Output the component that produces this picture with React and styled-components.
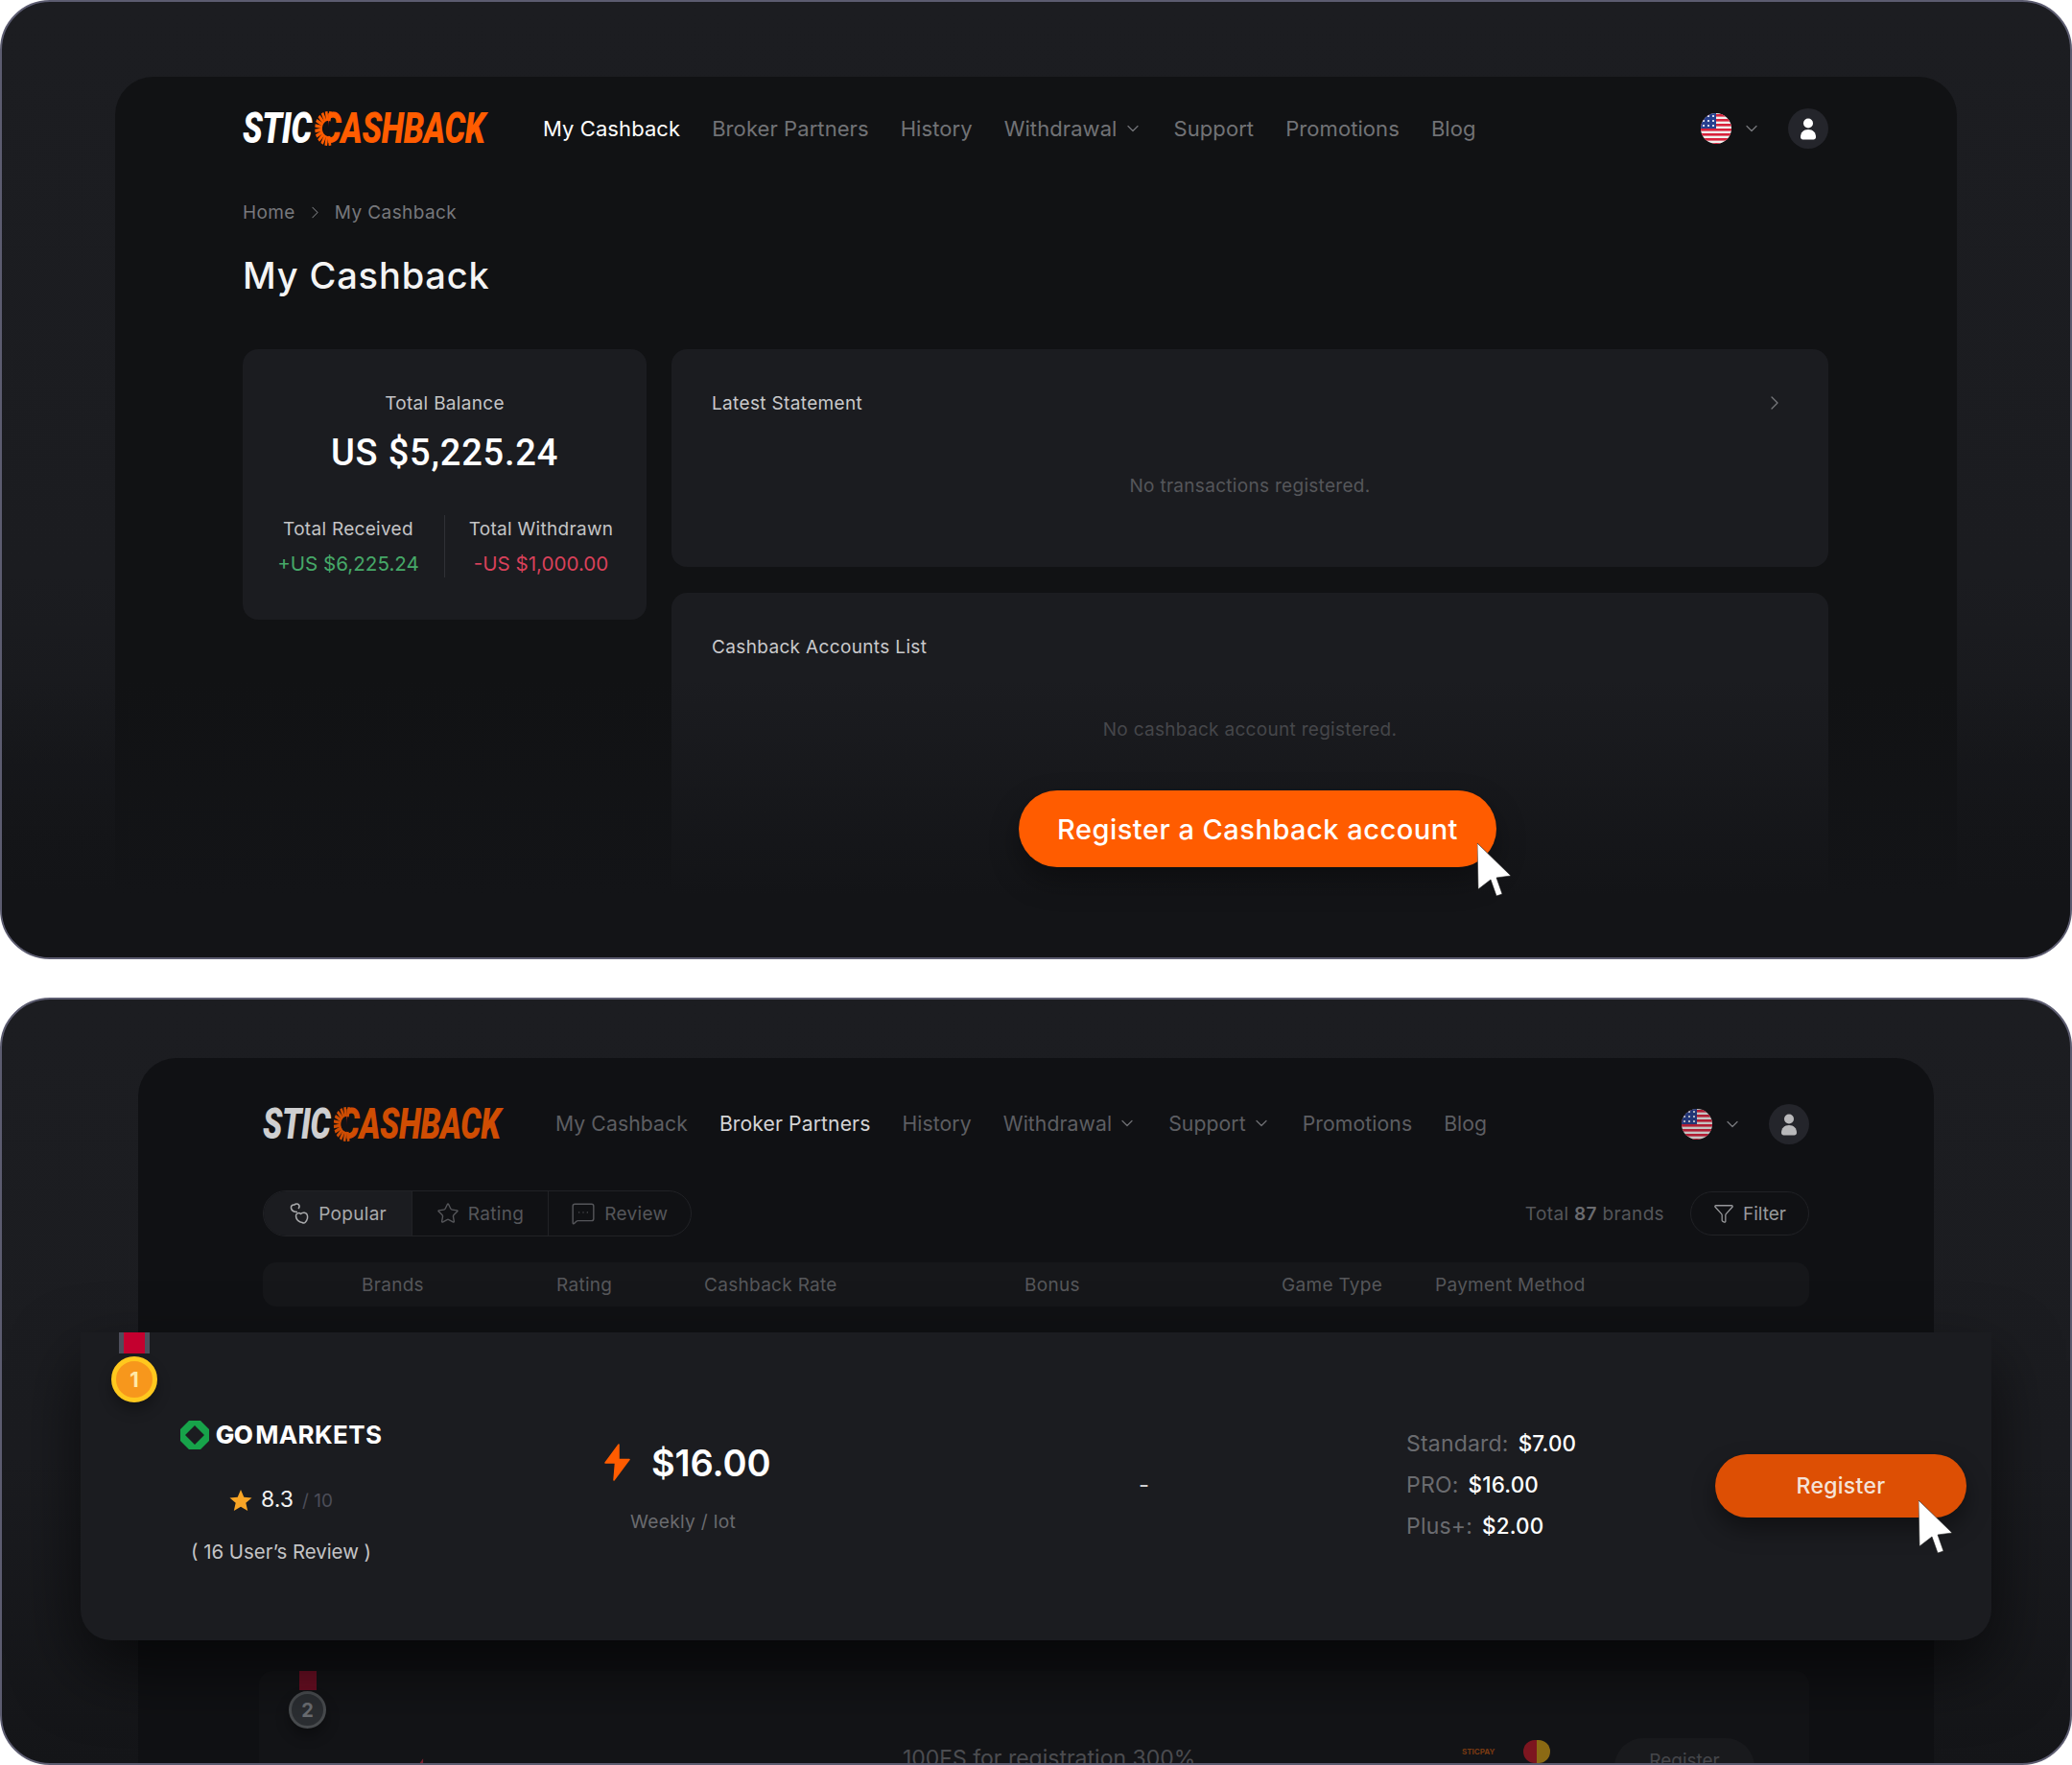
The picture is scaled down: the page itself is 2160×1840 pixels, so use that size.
import React from "react";
import styled, { createGlobalStyle } from "styled-components";
import { ChevronDown, ChevronRight, Star, MessageSquareMore, Funnel } from "lucide-react";

const GlobalStyle = createGlobalStyle`
	html, body {
		margin: 0;
		padding: 0;
		background: #fff;
		font-family: "Inter", "Open Sans", sans-serif;
	}
	* {
		box-sizing: border-box;
	}
`;

const Page = styled.div`
	width: 2160px;
	height: 1840px;
	display: flex;
	flex-direction: column;
	gap: 40px;
`;

const Panel = styled.section`
	position: relative;
	width: 100%;
	height: ${(p) => p.$height}px;
	padding-top: ${(p) => p.$top}px;
	border: 2px solid #5c5c70;
	border-radius: 52px;
	overflow: hidden;
	background: linear-gradient(180deg, #1c1d21 0%, #1b1c20 60%, #141518 100%);
`;

const Inner = styled.div`
	height: 1200px;
	margin: 0 ${(p) => p.$side}px;
	padding: ${(p) => p.$pad};
	border-radius: 40px;
	background: ${(p) => p.$bg};
`;

const Fade = styled.div`
	position: absolute;
	left: 0;
	right: 0;
	bottom: 0;
	height: ${(p) => p.$height}px;
	background: linear-gradient(180deg, rgba(19, 20, 23, 0) 0%, rgba(19, 20, 23, 1) 78%);
	pointer-events: none;
`;

const Header = styled.header`
	display: flex;
	align-items: center;
	height: 42px;
`;

const LogoBox = styled.div`
	display: flex;
	flex: none;
	align-items: center;
	width: ${(p) => p.$width}px;
	margin-right: 56px;
	height: 42px;
	font-family: "Roboto", "Liberation Sans", sans-serif;
	font-size: 44px;
	font-weight: 900;
	font-style: italic;
	white-space: nowrap;
	opacity: ${(p) => (p.$dim ? 0.8 : 1)};
`;

const LogoText = styled.div`
	position: relative;
	display: flex;
	transform: scaleX(${(p) => p.$scale});
	transform-origin: left center;
	letter-spacing: -0.5px;
`;

const LogoWhite = styled.span`
	color: #fff;
	margin-right: 12px;
`;

const LogoOrange = styled.span`
	color: #ff5c00;
`;

const LogoRays = styled.svg`
	position: absolute;
	left: 97px;
	top: 8px;
`;

const Nav = styled.nav`
	display: flex;
	align-items: center;
	gap: 33px;
	flex: 1;
	margin-top: ${(p) => (p.$dim ? -2 : 0)}px;
`;

const NavItem = styled.a`
	display: flex;
	align-items: center;
	gap: 6px;
	font-size: ${(p) => (p.$dim ? 21.2 : 22)}px;
	letter-spacing: 0.08px;
	white-space: nowrap;
	color: ${(p) => (p.$active ? (p.$dim ? "#d4d4d6" : "#fff") : p.$dim ? "#5d5e62" : "#717276")};
	svg {
		color: ${(p) => (p.$dim ? "#6d6e72" : "#717276")};
	}
`;

const Tools = styled.div`
	display: flex;
	align-items: center;
`;

const FlagSvg = styled.svg`
	display: block;
	opacity: ${(p) => (p.$dim ? 0.8 : 1)};
`;

const LangChevron = styled(ChevronDown)`
	margin: 0 28px 0 11px;
	color: #77787c;
`;

const Avatar = styled.div`
	width: 42px;
	height: 42px;
	border-radius: 50%;
	background: #24252b;
	display: grid;
	place-content: center;
	color: ${(p) => (p.$dim ? "#b9b9bb" : "#fff")};
`;

const Breadcrumb = styled.div`
	display: flex;
	align-items: center;
	gap: 10px;
	margin-top: 52px;
	height: 28px;
	font-size: 19px;
	letter-spacing: 0.4px;
	color: #77787c;
`;

const Title = styled.h1`
	margin: 24px 0 49px;
	font-size: 38px;
	line-height: 56px;
	font-weight: 500;
	letter-spacing: 0.85px;
	color: #f4f4f4;
`;

const Board = styled.div`
	display: grid;
	grid-template-columns: 421px 1fr;
	gap: 26px;
	align-items: start;
`;

const Stack = styled.div`
	display: flex;
	flex-direction: column;
	gap: 27px;
`;

const Card = styled.div`
	border-radius: 16px;
	background: #1b1c20;
`;

const BalanceCard = styled(Card)`
	height: 282px;
	padding: 42px 10px 0;
	text-align: center;
`;

const BalanceLabel = styled.div`
	font-size: 19px;
	line-height: 30px;
	letter-spacing: 0.3px;
	color: #c4c4c6;
`;

const BalanceAmount = styled.div`
	margin-top: 16px;
	font-family: "Roboto", sans-serif;
	font-size: 38px;
	line-height: 40px;
	font-weight: 500;
	letter-spacing: 0.8px;
	color: #fff;
`;

const Split = styled.div`
	display: grid;
	grid-template-columns: 1fr 1px 1fr;
	margin-top: 45px;
`;

const SplitLine = styled.div`
	height: 65px;
	background: #2f3035;
`;

const SplitCol = styled.div`
	display: flex;
	flex-direction: column;
	gap: 6px;
`;

const SplitValue = styled.div`
	font-size: 20.6px;
	line-height: 30px;
	color: ${(p) => p.$color};
`;

const StatementCard = styled(Card)`
	height: ${(p) => p.$height}px;
	padding: 41px 42px 0;
`;

const CardHead = styled.div`
	display: flex;
	justify-content: space-between;
	align-items: center;
	height: 30px;
	font-size: 19px;
	letter-spacing: 0.35px;
	color: #c9c9cb;
	svg {
		margin-right: 2px;
		color: #77787c;
	}
`;

const Empty = styled.div`
	margin-top: 57px;
	text-align: center;
	font-size: 19px;
	line-height: 30px;
	letter-spacing: 0.3px;
	color: #55565a;
`;

const BigButton = styled.button`
	position: relative;
	z-index: 2;
	display: block;
	width: 498px;
	height: 80px;
	margin: 48px 0 0 320px;
	border: none;
	border-radius: 40px;
	background: #ff5c00;
	box-shadow: 0 14px 30px rgba(0, 0, 0, 0.35);
	font-family: inherit;
	font-size: 29px;
	font-weight: 500;
	letter-spacing: 0.5px;
	color: #fff;
`;

const CursorSvg = styled.svg`
	position: absolute;
	z-index: 3;
	left: ${(p) => p.$x}px;
	top: ${(p) => p.$y}px;
`;

const Toolbar = styled.div`
	display: flex;
	align-items: center;
	justify-content: space-between;
	margin-top: 48px;
`;

const Tabs = styled.div`
	display: flex;
	width: 447px;
	height: 48px;
	border: 1px solid #212226;
	border-radius: 24px;
	overflow: hidden;
`;

const Tab = styled.div`
	display: flex;
	align-items: center;
	justify-content: center;
	gap: 9px;
	width: ${(p) => p.$width}px;
	height: 100%;
	font-size: 19px;
	letter-spacing: 0.3px;
	color: ${(p) => (p.$active ? "#a9aaac" : "#55565a")};
	background: ${(p) => (p.$active ? "#1b1c20" : "transparent")};
	border-right: ${(p) => (p.$last ? "none" : "1px solid #212226")};
`;

const Totals = styled.div`
	display: flex;
	align-items: center;
	gap: 27px;
`;

const TotalText = styled.div`
	font-size: 19px;
	letter-spacing: 0.35px;
	color: #55565a;
	b {
		font-weight: 600;
		color: #6a6b6f;
	}
`;

const FilterButton = styled.div`
	display: flex;
	align-items: center;
	justify-content: center;
	gap: 9px;
	width: 124px;
	height: 46px;
	border: 1px solid #212226;
	border-radius: 23px;
	font-size: 19px;
	color: #97989b;
`;

const TableHead = styled.div`
	display: grid;
	grid-template-columns: 203px 154px 334px 268px 160px 1fr;
	align-items: center;
	height: 46px;
	margin-top: 27px;
	padding-left: 103px;
	border-radius: 14px;
	background: #16171a;
	font-size: 19px;
	letter-spacing: 0.3px;
	color: #56575b;
`;

const BrandCard = styled.div`
	position: relative;
	z-index: 2;
	display: grid;
	grid-template-columns: 446px 370px 466px 322px 262px;
	align-items: center;
	height: 321px;
	margin: 27px -190px 0;
	padding-left: 100px;
	border-radius: 0 0 32px 32px;
	background: #1b1c20;
	box-shadow: 0 30px 70px rgba(0, 0, 0, 0.6);
`;

const Medal = styled.div`
	position: absolute;
	left: ${(p) => p.$x}px;
	top: ${(p) => p.$y}px;
	display: flex;
	flex-direction: column;
	align-items: center;
	gap: ${(p) => p.$gap}px;
`;

const Ribbon = styled.div`
	width: ${(p) => p.$width}px;
	height: ${(p) => p.$height}px;
	background: ${(p) => p.$bg};
	border-left: ${(p) => p.$side} solid #4d4e5c;
	border-right: ${(p) => p.$side} solid #4d4e5c;
`;

const MedalCoin = styled.div`
	display: grid;
	place-content: center;
	width: ${(p) => p.$size}px;
	height: ${(p) => p.$size}px;
	border-radius: 50%;
	border: ${(p) => p.$ring};
	background: ${(p) => p.$bg};
	font-size: ${(p) => p.$font}px;
	font-weight: 700;
	color: ${(p) => p.$color};
	box-shadow: 0 8px 14px rgba(0, 0, 0, 0.3);
`;

const BrandCol = styled.div`
	width: 218px;
	display: flex;
	flex-direction: column;
	align-items: center;
	margin-top: 14px;
`;

const BrandLogo = styled.div`
	display: flex;
	align-items: center;
	font-size: 26px;
	line-height: 30px;
	color: #fff;
	white-space: nowrap;
`;

const BrandGo = styled.span`
	font-weight: 800;
	margin: 0 3px 0 7px;
	letter-spacing: -0.6px;
`;

const BrandMarkets = styled.span`
	font-weight: 700;
	letter-spacing: 0.35px;
`;

const Score = styled.div`
	display: flex;
	align-items: baseline;
	margin-top: 38px;
	font-size: 23px;
	line-height: 28px;
	color: #f2f2f2;
	small {
		margin-left: 9px;
		font-size: 19px;
		color: #4c4d58;
	}
	svg {
		margin-right: 9px;
		align-self: center;
	}
`;

const Reviews = styled.div`
	margin-top: 25px;
	font-size: 20.4px;
	line-height: 28px;
	color: #c4c4c6;
`;

const RateCol = styled.div`
	margin-top: 3px;
`;

const RateValue = styled.div`
	display: flex;
	align-items: center;
	gap: 22px;
	font-size: 38px;
	line-height: 44px;
	font-weight: 600;
	letter-spacing: -0.1px;
	color: #fff;
`;

const RateUnit = styled.div`
	margin: 25px 0 0 27px;
	font-size: 19.2px;
	line-height: 28px;
	letter-spacing: 0.3px;
	color: #6a6b6f;
`;

const Dash = styled.div`
	padding-left: 187px;
	margin-top: -4px;
	font-size: 24px;
	color: #d0d0d2;
`;

const Accounts = styled.div`
	display: flex;
	flex-direction: column;
	gap: 11px;
	margin-top: -4px;
`;

const AccountRow = styled.div`
	display: flex;
	gap: 10px;
	font-size: 23px;
	line-height: 32px;
	letter-spacing: 0.2px;
	color: #6a6b6f;
	b {
		font-size: 22.4px;
		font-weight: 500;
		color: #fff;
	}
`;

const RegisterButton = styled.button`
	height: 66px;
	width: 262px;
	margin-top: -2px;
	border: none;
	border-radius: 33px;
	background: #dd4f04;
	box-shadow: 0 12px 24px rgba(0, 0, 0, 0.4);
	font-family: inherit;
	font-size: 23px;
	font-weight: 500;
	letter-spacing: 0.3px;
	color: #f5e3d8;
`;

const NextRow = styled.div`
	position: relative;
	display: grid;
	grid-template-columns: 671px 585px 157px 1fr;
	height: 200px;
	margin: 32px 0 0 -4px;
	padding-top: 76px;
	background: #131417;
	border-radius: 14px;
	font-size: 23px;
	color: #4b4c50;
	align-items: start;
`;

const NextBolt = styled.svg`
	margin: 14px 0 0 160px;
`;

const NextPromo = styled.div`
	line-height: 30px;
	white-space: nowrap;
`;

const NextPay = styled.div`
	display: flex;
	align-items: center;
	gap: 30px;
	margin: -4px 0 0 -2px;
	font-size: 8px;
	font-weight: 700;
	color: #7a3a12;
`;

const NextCoins = styled.div`
	width: 28px;
	height: 24px;
	border-radius: 12px;
	background: linear-gradient(90deg, #7d1620 0%, #7d1620 50%, #8b6a14 50%, #8b6a14 100%);
`;

const NextButton = styled.div`
	width: 146px;
	height: 60px;
	margin-top: -6px;
	padding-top: 12px;
	border-radius: 30px;
	background: #191a1d;
	text-align: center;
	font-size: 19px;
	color: #45464a;
`;

const Flag = ({ id, dim }) => (
	<FlagSvg $dim={dim} width="32" height="32" viewBox="0 0 32 32">
		<defs>
			<clipPath id={id}>
				<circle cx="16" cy="16" r="16" />
			</clipPath>
		</defs>
		<g clipPath={`url(#${id})`}>
			<rect width="32" height="32" fill="#f2f0ee" />
			{[0, 5, 10, 15, 20, 25, 30].map((y) => (
				<rect key={y} y={y + 1} width="32" height="2.6" fill="#d8213b" />
			))}
			<rect width="16" height="16" fill="#28408f" />
			{[3, 8, 13].map((x) =>
				[3, 8, 13].map((y) => <circle key={`${x}-${y}`} cx={x} cy={y} r="1.1" fill="#fff" />)
			)}
		</g>
	</FlagSvg>
);

const UserIcon = () => (
	<svg width="24" height="24" viewBox="0 0 24 24" fill="currentColor">
		<circle cx="12" cy="6.5" r="5" />
		<path d="M4 21c0-5 3-8 8-8s8 3 8 8c0 1.600-1.200 2.400-2.400 2.400H6.400C5.200 23.400 4 22.600 4 21z" />
	</svg>
);

const Cursor = ({ x, y }) => (
	<CursorSvg $x={x} $y={y} width="36" height="56" viewBox="0 0 36 56">
		<path d="M0 0 L1 48 L14 38 L20 55 L26 53 L20 36 L35 34 Z" fill="#fff" stroke="#222" strokeWidth="0.6" />
	</CursorSvg>
);

const Logo = ({ width, dim, scale, bg }) => {
	const rays = [];
	for (let a = 80; a <= 280; a += 18) {
		const r = (a * Math.PI) / 180;
		rays.push(
			<line
				key={a}
				x1={18 + 8 * Math.cos(r)}
				y1={18 - 8 * Math.sin(r)}
				x2={18 + 18 * Math.cos(r)}
				y2={18 - 18 * Math.sin(r)}
				stroke="#ff5c00"
				strokeWidth="3.4"
			/>
		);
	}
	return (
		<LogoBox $width={width} $dim={dim}>
			<LogoText $scale={scale}>
				<LogoWhite>STIC</LogoWhite>
				<LogoOrange>CASHBACK</LogoOrange>
				<LogoRays width="36" height="36" viewBox="0 0 36 36">
					<path d="M18 0 A18 18 0 0 0 18 36 Z" fill={bg} />
					{rays}
				</LogoRays>
			</LogoText>
		</LogoBox>
	);
};

const Chevron = () => <ChevronDown size={20} strokeWidth={1.5} />;

const TopBar = ({ active, dim, supportMenu, flagId, logoWidth, logoScale, bg }) => (
	<Header>
		<Logo width={logoWidth} dim={dim} scale={logoScale} bg={bg} />
		<Nav $dim={dim}>
			{["My Cashback", "Broker Partners", "History", "Withdrawal", "Support", "Promotions", "Blog"].map((label) => (
				<NavItem key={label} $active={label === active} $dim={dim}>
					{label}
					{(label === "Withdrawal" || (supportMenu && label === "Support")) && <Chevron />}
				</NavItem>
			))}
		</Nav>
		<Tools>
			<Flag id={flagId} dim={dim} />
			<LangChevron size={20} strokeWidth={1.5} />
			<Avatar $dim={dim}>
				<UserIcon />
			</Avatar>
		</Tools>
	</Header>
);

const PopularIcon = () => (
	<svg width="22" height="24" viewBox="0 0 22 24" fill="none" stroke="currentColor" strokeWidth="1.5" strokeLinejoin="round">
		<path d="M9 10.500C6 10.500 3 9 2.500 6.500C2 4 4 2.500 6 3C7 1.500 9.500 1.500 10.500 3C11.500 4.500 11 6 10 7" />
		<path d="M14 21.500C10 20.500 7.500 17.500 7.500 14.500C7.500 12 10.500 10.500 12.500 12.500C14 10.500 19 10.500 19.500 14.500C20 18 18 20.500 17 21.500C16 22.500 15 22 14 21.500Z" />
	</svg>
);

const BoltIcon = ({ color, w, h }) => (
	<svg width={w} height={h} viewBox="0 0 27 39" fill={color} stroke={color} strokeWidth="1.5" strokeLinejoin="round">
		<path d="M15 1 L1 20 L11.500 20 L10 38 L26 16.500 L15 16.500 Z" />
	</svg>
);

const MyCashbackScreen = () => (
	<Panel $height={1000} $top={78}>
		<Inner $side={118} $pad="33px 134px 0 133px" $bg="#111214">
			<TopBar active="My Cashback" flagId="flag-top" logoWidth={257} logoScale={0.775} bg="#111214" />
			<Breadcrumb>
				Home
				<ChevronRight size={21} strokeWidth={1.2} />
				My Cashback
			</Breadcrumb>
			<Title>My Cashback</Title>
			<Board>
				<BalanceCard>
					<BalanceLabel>Total Balance</BalanceLabel>
					<BalanceAmount>US $5,225.24</BalanceAmount>
					<Split>
						<SplitCol>
							<BalanceLabel>Total Received</BalanceLabel>
							<SplitValue $color="#46a868">+US $6,225.24</SplitValue>
						</SplitCol>
						<SplitLine />
						<SplitCol>
							<BalanceLabel>Total Withdrawn</BalanceLabel>
							<SplitValue $color="#d9415a">-US $1,000.00</SplitValue>
						</SplitCol>
					</Split>
				</BalanceCard>
				<Stack>
					<StatementCard $height={227}>
						<CardHead>
							Latest Statement
							<ChevronRight size={24} strokeWidth={1.3} />
						</CardHead>
						<Empty>No transactions registered.</Empty>
					</StatementCard>
					<StatementCard $height={420}>
						<CardHead>Cashback Accounts List</CardHead>
						<Empty>No cashback account registered.</Empty>
						<BigButton>Register a Cashback account</BigButton>
					</StatementCard>
				</Stack>
			</Board>
		</Inner>
		<Fade $height={290} />
		<Cursor x={1538} y={877} />
	</Panel>
);

const BrokerScreen = () => (
	<Panel $height={800} $top={61}>
		<Inner $side={142} $pad="48px 130px 0" $bg="#101114">
			<TopBar
				active="Broker Partners"
				dim
				supportMenu
				flagId="flag-broker"
				logoWidth={249}
				logoScale={0.76}
				bg="#101114"
			/>
			<Toolbar>
				<Tabs>
					<Tab $active $width={156}>
						<PopularIcon />
						Popular
					</Tab>
					<Tab $width={142}>
						<Star size={24} strokeWidth={1.4} />
						Rating
					</Tab>
					<Tab $last $width={149}>
						<MessageSquareMore size={26} strokeWidth={1.3} />
						Review
					</Tab>
				</Tabs>
				<Totals>
					<TotalText>
						Total <b>87</b> brands
					</TotalText>
					<FilterButton>
						<Funnel size={22} strokeWidth={1.4} />
						Filter
					</FilterButton>
				</Totals>
			</Toolbar>
			<TableHead>
				<span>Brands</span>
				<span>Rating</span>
				<span>Cashback Rate</span>
				<span>Bonus</span>
				<span>Game Type</span>
				<span>Payment Method</span>
			</TableHead>
			<BrandCard>
				<Medal $x={32} $y={0} $gap={3}>
					<Ribbon $width={32} $height={22} $bg="#c4002f" $side="5px" />
					<MedalCoin $size={48} $font={22} $ring="5px solid #ffc81e" $bg="#f7971c" $color="#ffe9a8">
						1
					</MedalCoin>
				</Medal>
				<BrandCol>
					<BrandLogo>
						<svg width="30" height="30" viewBox="0 0 30 30">
							<path
								d="M9 0 H21 L30 9 V21 L21 30 H9 L0 21 V9 Z M15 5 L5 15 L15 25 L25 15 Z"
								fill="#17a34a"
								fillRule="evenodd"
							/>
						</svg>
						<BrandGo>GO</BrandGo>
						<BrandMarkets>MARKETS</BrandMarkets>
					</BrandLogo>
					<Score>
						<svg width="24" height="24" viewBox="0 0 24 24" fill="#f9a526">
							<path d="M12 1 L15.300 8.700 L23.500 9.400 L17.300 14.800 L19.200 23 L12 18.700 L4.800 23 L6.700 14.800 L0.500 9.400 L8.700 8.700 Z" />
						</svg>
						8.3
						<small>/ 10</small>
					</Score>
					<Reviews>( 16 User’s Review )</Reviews>
				</BrandCol>
				<RateCol>
					<RateValue>
						<BoltIcon color="#ff5c00" w={27} h={39} />
						$16.00
					</RateValue>
					<RateUnit>Weekly / lot</RateUnit>
				</RateCol>
				<Dash>-</Dash>
				<Accounts>
					<AccountRow>
						Standard: <b>$7.00</b>
					</AccountRow>
					<AccountRow>
						PRO: <b>$16.00</b>
					</AccountRow>
					<AccountRow>
						Plus+: <b>$2.00</b>
					</AccountRow>
				</Accounts>
				<RegisterButton>Register</RegisterButton>
				<Cursor x={1916} y={175} />
			</BrandCard>
			<NextRow>
				<Medal $x={31} $y={0} $gap={1}>
					<Ribbon $width={18} $height={20} $bg="#6d0f24" $side="0px" />
					<MedalCoin $size={39} $font={20} $ring="3px solid #4a4d50" $bg="#2c2f33" $color="#6d7074">
						2
					</MedalCoin>
				</Medal>
				<NextBolt width="20" height="30" viewBox="0 0 27 39" fill="#7a1f2c">
					<path d="M15 1 L1 20 L11.500 20 L10 38 L26 16.500 L15 16.500 Z" />
				</NextBolt>
				<NextPromo>100FS for registration 300%</NextPromo>
				<NextPay>
					STICPAY
					<NextCoins />
				</NextPay>
				<NextButton>Register</NextButton>
			</NextRow>
		</Inner>
	</Panel>
);

const App = () => (
	<>
		<GlobalStyle />
		<Page>
			<MyCashbackScreen />
			<BrokerScreen />
		</Page>
	</>
);

export default App;
